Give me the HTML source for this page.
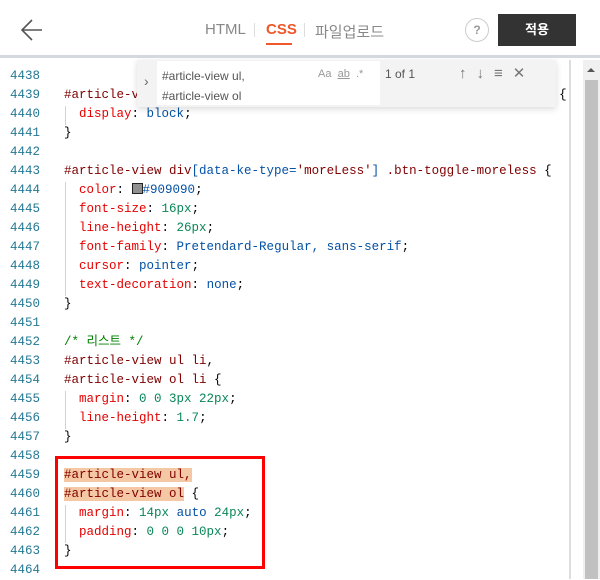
<!DOCTYPE html>
<html><head><meta charset="utf-8"><style>
*{margin:0;padding:0;box-sizing:border-box}
body{width:600px;height:579px;overflow:hidden;background:#fff;font-family:"Liberation Sans","Noto Sans CJK KR",sans-serif;position:relative}
.hdr{position:absolute;left:0;top:0;width:600px;height:58px;background:#fff;border-bottom:3px solid #d5d8de}
.tabs{position:absolute;top:21px;font-size:15px;color:#888}
.code{position:absolute;left:0;top:67px;width:569px;font-family:"Liberation Mono","Noto Sans CJK KR",monospace;font-size:12.5px;line-height:19px;white-space:pre}
.code>div{height:19px;overflow:hidden}
.ln{display:inline-block;width:40px;text-align:right;color:#237893;margin-right:24px}
.r{color:#e50000}.s{color:#0451a5}.n{color:#098658}.c{color:#008000}.b{color:#800000}.k{color:#000}
.vl{position:absolute;left:569px;top:60px;width:2px;height:519px;background:#ddd}
.sb{position:absolute;left:583px;top:60px;width:17px;height:519px;background:#f0f0f0}
.th{position:absolute;left:585px;top:80px;width:13px;height:499px;background:#c1c1c1}
.fw{position:absolute;left:137px;top:60px;width:419px;height:47px;background:#f3f3f3;box-shadow:0 2px 6px rgba(0,0,0,.15)}
.guide{position:absolute;left:65px;width:1px;background:#d3d3d3}
</style></head><body>
<div class="code"><div><span class="ln">4438</span></div><div><span class="ln">4439</span><span class="b">#article-view div[data-ke-type='moreLess'] .moreless-content-text</span> {</div><div><span class="ln">4440</span>  <span class="r">display</span>: <span class="s">block</span>;</div><div><span class="ln">4441</span>}</div><div><span class="ln">4442</span></div><div><span class="ln">4443</span><span class="b">#article-view div</span><span class="s">[data-ke-type=</span><span class="b">'moreLess'</span><span class="s">]</span> <span class="b">.btn-toggle-moreless</span> {</div><div><span class="ln">4444</span>  <span class="r">color</span>: <span style="display:inline-block;width:11px;height:11px;background:#909090;border:1px solid #222;vertical-align:-1px"></span><span class="s">#909090</span>;</div><div><span class="ln">4445</span>  <span class="r">font-size</span>: <span class="n">16px</span>;</div><div><span class="ln">4446</span>  <span class="r">line-height</span>: <span class="n">26px</span>;</div><div><span class="ln">4447</span>  <span class="r">font-family</span>: <span class="s">Pretendard-Regular, sans-serif</span>;</div><div><span class="ln">4448</span>  <span class="r">cursor</span>: <span class="s">pointer</span>;</div><div><span class="ln">4449</span>  <span class="r">text-decoration</span>: <span class="s">none</span>;</div><div><span class="ln">4450</span>}</div><div><span class="ln">4451</span></div><div><span class="ln">4452</span><span class="c">/* 리스트 */</span></div><div><span class="ln">4453</span><span class="b">#article-view ul li</span>,</div><div><span class="ln">4454</span><span class="b">#article-view ol li</span> {</div><div><span class="ln">4455</span>  <span class="r">margin</span>: <span class="n">0 0 3px 22px</span>;</div><div><span class="ln">4456</span>  <span class="r">line-height</span>: <span class="n">1.7</span>;</div><div><span class="ln">4457</span>}</div><div><span class="ln">4458</span></div><div><span class="ln">4459</span><span class="b" style="background:#f5c8a5">#article-view ul,</span></div><div><span class="ln">4460</span><span class="b" style="background:#f5c8a5">#article-view ol</span> {</div><div><span class="ln">4461</span>  <span class="r">margin</span>: <span class="n">14px</span> <span class="s">auto</span> <span class="n">24px</span>;</div><div><span class="ln">4462</span>  <span class="r">padding</span>: <span class="n">0 0 0 10px</span>;</div><div><span class="ln">4463</span>}</div><div><span class="ln">4464</span></div></div>
<div class="guide" style="top:106px;height:19px"></div>
<div class="guide" style="top:182px;height:114px"></div>
<div class="guide" style="top:391px;height:38px"></div>
<div class="guide" style="top:505px;height:38px"></div>
<div style="position:absolute;left:55px;top:456px;width:210px;height:113px;border:3px solid #f00"></div>
<div class="vl"></div><div class="sb"></div><div class="th"></div>
<div style="position:absolute;left:587px;top:68px;width:0;height:0;border-left:4px solid transparent;border-right:4px solid transparent;border-bottom:4px solid #555"></div>
<div class="fw">
<div style="position:absolute;left:7px;top:13px;color:#666;font-size:14px">›</div>
<div style="position:absolute;left:20px;top:1px;width:223px;height:44px;background:#fff"></div>
<div style="position:absolute;left:25px;top:6px;font-size:12px;color:#555;line-height:20px">#article-view ul,<br>#article-view ol</div>
<div style="position:absolute;left:181px;top:8px;font-size:11px;color:#999">Aa &nbsp;<u>ab</u>&nbsp; .*</div>
<div style="position:absolute;left:248px;top:7px;font-size:12px;color:#555">1 of 1</div>
<div style="position:absolute;left:322px;top:4px;font-size:15px;color:#777;letter-spacing:10px">↑↓≡✕</div>
</div>
<div class="hdr">
<svg style="position:absolute;left:20px;top:19px" width="24" height="22" viewBox="0 0 24 22"><path d="M12 1L2 11l10 10M2 11h20" fill="none" stroke="#555" stroke-width="1.6"/></svg>
<div class="tabs" style="left:205px">HTML</div>
<div style="position:absolute;left:254px;top:23px;width:1px;height:14px;background:#ddd"></div>
<div class="tabs" style="left:266px;color:#f0572a;font-weight:bold">CSS</div>
<div style="position:absolute;left:266px;top:43px;width:26px;height:2px;background:#f0572a"></div>
<div style="position:absolute;left:304px;top:23px;width:1px;height:14px;background:#ddd"></div>
<div class="tabs" style="left:315px">파일업로드</div>
<div style="position:absolute;left:465px;top:18px;width:24px;height:24px;border:1px solid #ccc;border-radius:50%;text-align:center;font-size:12px;line-height:22px;color:#999;font-weight:bold">?</div>
<div style="position:absolute;left:498px;top:14px;width:78px;height:32px;background:#333;color:#fff;font-size:13px;font-weight:bold;text-align:center;line-height:32px">적용</div>
</div>
</body></html>
